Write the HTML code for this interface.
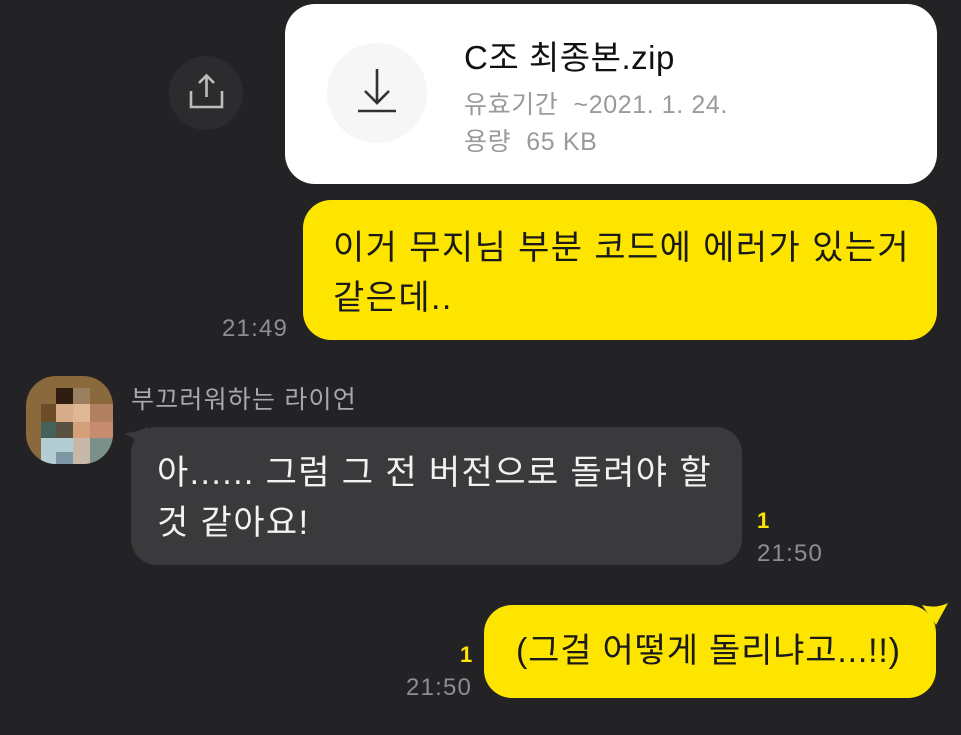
<!DOCTYPE html><html><head><meta charset="utf-8"><style>
*{margin:0;padding:0;box-sizing:border-box}
body{width:961px;height:735px;background:#232326;position:relative;overflow:hidden;font-family:"Liberation Sans","Noto Sans CJK KR",sans-serif}
.a{position:absolute;white-space:nowrap}
.y{background:#fee500;color:#1a1a1a}
.t{color:#8e8e90;font-size:24px;letter-spacing:1.2px}
.one{color:#fee500;font-size:22px;font-weight:bold}
.big{font-size:34px;letter-spacing:1.4px;line-height:50px}
</style></head><body>
<div class="a" style="left:169px;top:56px;width:74px;height:74px;border-radius:50%;background:#2c2c2f"></div>
<svg class="a" style="left:169px;top:56px" width="74" height="74"><g fill="none" stroke="#bdbdbd" stroke-width="2.6"><path d="M22 35v16h31V35M37.5 20v21M30 27l7.5-7.5L45 27"/></g></svg>
<div class="a" style="left:285px;top:4px;width:652px;height:180px;border-radius:30px;background:#fff"></div>
<div class="a" style="left:327px;top:43px;width:100px;height:100px;border-radius:50%;background:#f6f6f6"></div>
<svg class="a" style="left:327px;top:43px" width="100" height="100"><g fill="none" stroke="#333" stroke-width="2.6"><path d="M50 26v34M38 48l12 12 12-12M31 68h38"/></g></svg>
<div class="a" style="left:464px;top:31px;font-size:33px;letter-spacing:0.5px;color:#111">C조 최종본.zip</div>
<div class="a" style="left:464px;top:85px;font-size:25px;letter-spacing:0.6px;color:#9a9a9a">유효기간&nbsp; ~2021. 1. 24.</div>
<div class="a" style="left:464px;top:122px;font-size:25px;letter-spacing:0.6px;color:#9a9a9a">용량&nbsp; 65 KB</div>
<div class="a y big" style="left:303px;top:200px;width:634px;height:140px;border-radius:28px;padding:23px 0 0 30px">이거 무지님 부분 코드에 에러가 있는거<br>같은데..</div>
<div class="a t" style="left:222px;top:315px">21:49</div>
<svg class="a" style="left:26px;top:376px" width="87" height="88"><defs><clipPath id="c"><rect x="0" y="0" width="87" height="88" rx="30"/></clipPath></defs><g clip-path="url(#c)">
<rect width="87" height="88" fill="#8a6a3c"/>
<rect x="30" y="12" width="17" height="16" fill="#2e1d10"/><rect x="47" y="12" width="17" height="16" fill="#9b8060"/>
<rect x="15" y="28" width="15" height="18" fill="#6b4c28"/><rect x="47" y="28" width="17" height="18" fill="#e0b896"/><rect x="30" y="28" width="17" height="18" fill="#d6ad88"/><rect x="64" y="28" width="23" height="18" fill="#b08060"/>
<rect x="15" y="46" width="15" height="16" fill="#46605a"/><rect x="30" y="46" width="17" height="16" fill="#5a5040"/><rect x="47" y="46" width="17" height="16" fill="#d4a07c"/><rect x="64" y="46" width="23" height="16" fill="#c78b70"/>
<rect x="15" y="62" width="32" height="26" fill="#b4ccd4"/><rect x="47" y="62" width="17" height="26" fill="#c8b8a8"/><rect x="64" y="62" width="23" height="26" fill="#7a9088"/><rect x="30" y="76" width="17" height="12" fill="#7e96a4"/>
</g></svg>
<div class="a" style="left:131px;top:380px;font-size:25px;letter-spacing:1.2px;color:#a8a8aa">부끄러워하는 라이언</div>
<div class="a big" style="left:131px;top:427px;width:611px;height:138px;border-radius:26px;background:#3a3a3c;color:#f2f2f2;padding:21px 0 0 26px">아...... 그럼 그 전 버전으로 돌려야 할<br>것 같아요!</div>
<svg class="a" style="left:124px;top:427px" width="24" height="20"><path d="M0 6 Q12 6 24 0 L24 20 Z" fill="#3a3a3c"/></svg>
<div class="a one" style="left:757px;top:508px">1</div>
<div class="a t" style="left:757px;top:540px">21:50</div>
<div class="a y big" style="left:484px;top:605px;width:452px;height:93px;border-radius:28px;padding:21px 0 0 32px;letter-spacing:0.8px">(그걸 어떻게 돌리냐고...!!)</div>
<svg class="a" style="left:922px;top:603px" width="26" height="22"><path d="M0 2 Q14 6 26 0 L14 22 Z" fill="#fee500"/></svg>
<div class="a one" style="left:460px;top:642px">1</div>
<div class="a t" style="left:406px;top:674px">21:50</div>
</body></html>
